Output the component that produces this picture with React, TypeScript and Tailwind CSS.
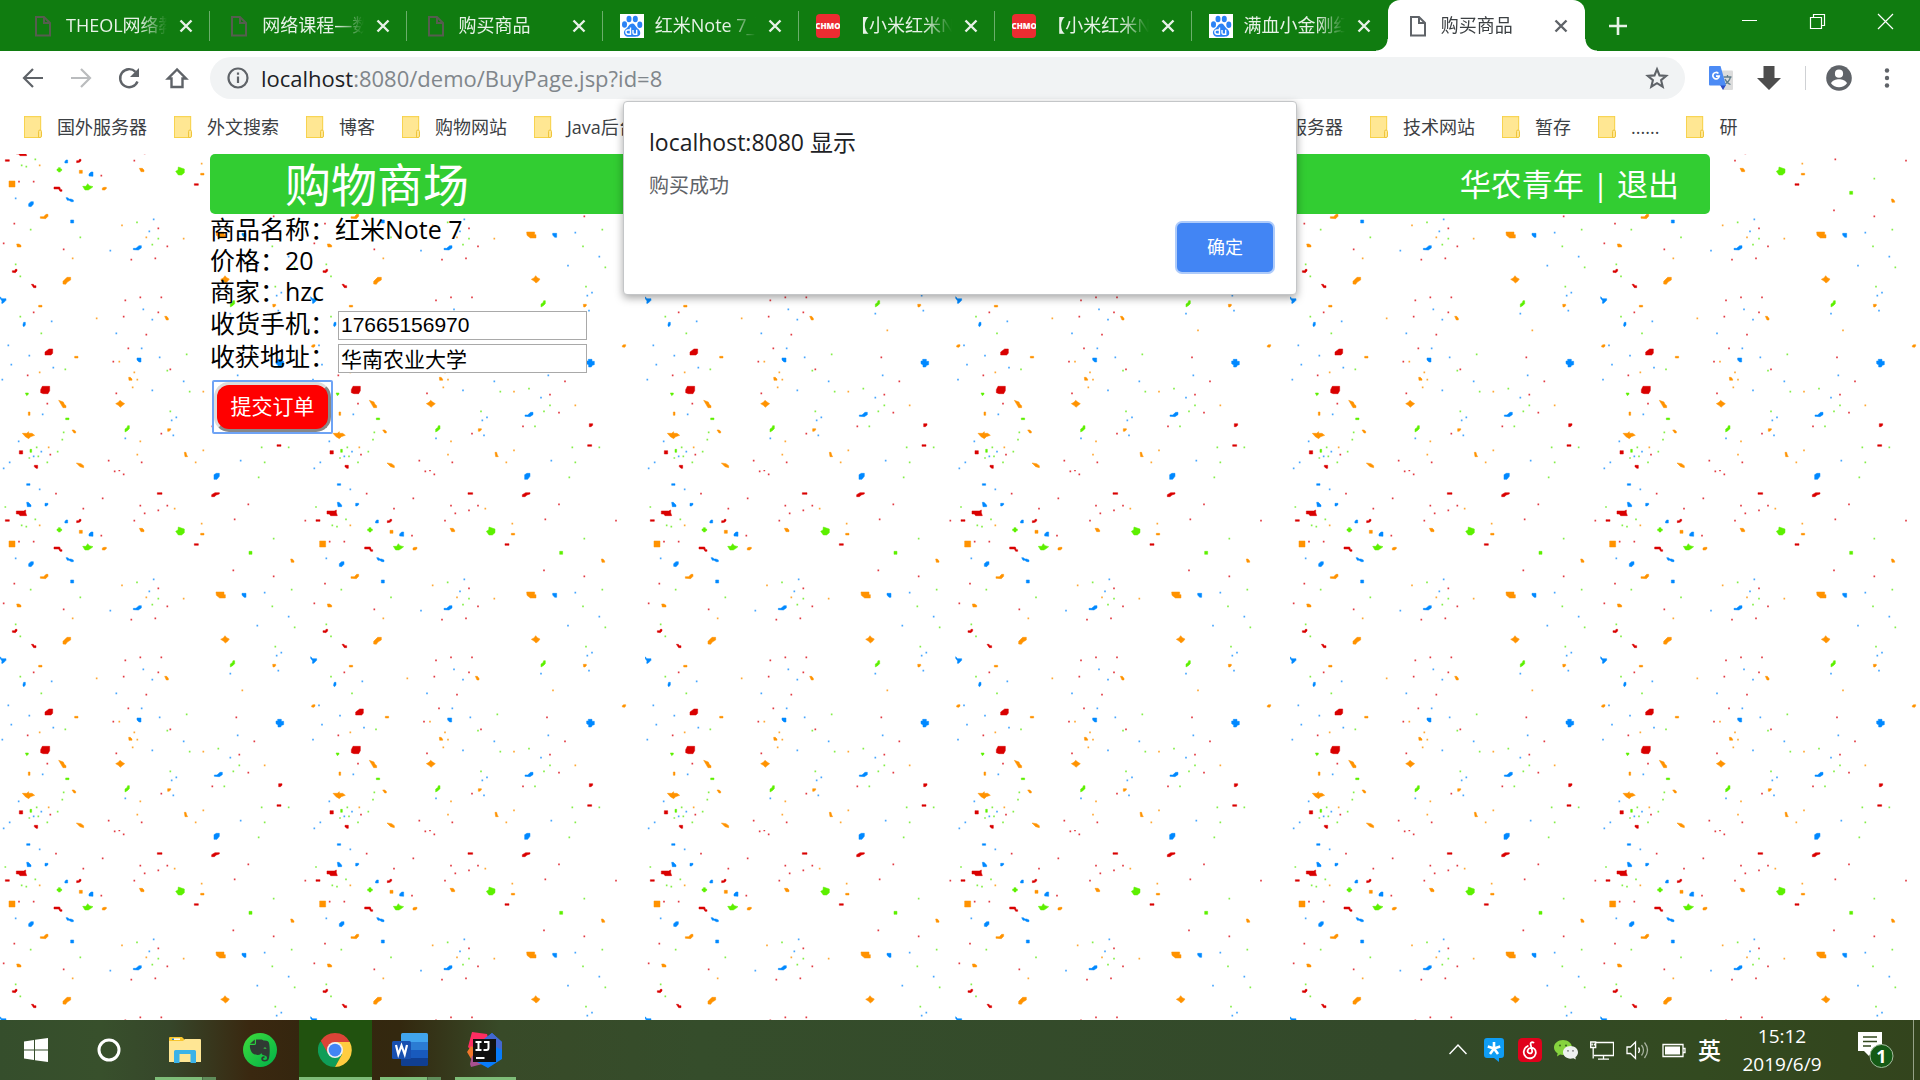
import React from "react";

const DOTS: { color: string; at: number[][] }[] = [
  {
    color: "#e23a42",
    at: [
      [344, 4], [358, 1], [371, 13], [168, 71], [308, 85], [250, 116], [421, 107], [434, 130], [475, 121], [502, 107],
      [403, 152], [745, 103], [704, 148], [304, 197], [57, 215], [101, 215], [916, 152], [700, 301], [821, 319], [43, 341],
      [11, 400], [475, 355], [502, 409], [191, 418], [394, 449], [466, 445], [421, 562], [376, 571], [484, 562], [475, 607],
      [371, 620], [101, 607], [439, 674], [385, 715], [340, 755], [511, 778], [83, 796], [349, 850], [142, 881], [709, 742],
      [763, 814], [718, 854], [745, 908], [637, 949], [484, 971], [151, 1034], [326, 1052], [425, 1057],
    ],
  },
  {
    color: "#ffa834",
    at: [
      [119, 166], [524, 116], [605, 161], [366, 346], [439, 382], [551, 386], [218, 445], [290, 625], [727, 661], [119, 787],
      [358, 755], [403, 787], [412, 809], [398, 832], [610, 845], [794, 886], [146, 1012], [421, 994], [412, 1034], [610, 1021],
      [587, 1057],
    ],
  },
  {
    color: "#84ee48",
    at: [
      [776, 22], [16, 111], [106, 148], [65, 166], [79, 170], [821, 206], [411, 337], [92, 359], [241, 382], [475, 386],
      [457, 404], [817, 409], [875, 359], [884, 472], [47, 463], [61, 499], [826, 530], [61, 620], [124, 670], [560, 733],
      [196, 778], [502, 782], [655, 836], [569, 845], [718, 886], [511, 904], [700, 904], [673, 949], [191, 967], [187, 989],
      [110, 1012], [173, 1025], [115, 1039], [88, 1044], [142, 1057], [785, 1012], [866, 1012], [794, 1057],
    ],
  },
  {
    color: "#46a6ff",
    at: [
      [119, 58], [47, 265], [461, 328], [448, 364], [331, 422], [794, 368], [866, 440], [772, 467], [844, 548], [830, 557],
      [835, 602], [430, 598], [457, 629], [691, 611], [155, 634], [349, 670], [25, 706], [88, 737], [425, 715], [479, 742],
      [160, 773], [34, 764], [7, 809], [551, 814], [713, 796], [457, 841], [691, 863], [128, 913], [529, 922], [515, 931],
      [520, 976], [376, 985], [56, 994], [124, 1025], [101, 1039], [29, 1057], [11, 1075], [722, 1052],
    ],
  },
];

const PIECES: { color: string; d: string }[] = [
  {
    color: "#d90000",
    d: "M16 149h12v5h-12z M472 68h14v5h-14z M583 221h12v5h-12z M831 1004h12v5h-12z M49 123h22l6-3v8l3 9h-20l-4-5h-7z M635 80v-6l10-6h13v4l-9 3l-6 5z M230 158v-6h6l2-4h5v5l-5 4z M162 231h17l3 8h4v5h-6l-4-7h-14z M37 487v-5h7l2-4h5v5l-5 5z M94 523h6l3 4h5v6h-7z M135 735v-9l12-9h11v13l-5 5z M122 848v-9l5-10h22v13l-5 9h-14z M836 950v-9h10v5l-5 4z M58 1022h10v10h-10z M103 1066h10v9h-5l-5-5z",
  },
  {
    color: "#ff9200",
    d: "M602 190h10v5h-10z M116 586h10v5h-10z M224 739h10v5h-10z M85 906h5v10h-5z M27 213h18v18h-18z M238 181h9v9h-9z M418 175h9l5 5v5h-9z M307 240v-6l5-2h7v4l-5 4z M872 267h5l5 6v4h-8z M121 325v-5h10l7-7h6v6l-7 7z M648 366h24v8h4v10h-17l-10-8z M50 402h7l6 4v5h-11z M189 522v-8l12-12h11v8l-10 6l-5 7z M662 508l8-4l5-7l5 6l8 4l-5 7l-7 5l-5-5z M494 619h6l5 6v5h-6z M818 583h9v4l-4 4h-4z M935 711v-4l4-3h6v4l-3 4z M386 802h5l5 5v4h-9z M176 871l14 5l3 7l5 4v6h-9l-6-10z M347 881l8-4l5-6l6 5l8 5l-6 5l-7 6l-6-6z M67 970h13l6-5v5h10l8 6l-12 4l-6 6l-10-6z M216 960h6l5 4v5h-5z M503 956h9v4l-5 4h-4z M229 1059l14 2l8 6v6l-11-3z M553 1027h5l2 8l3 5h-8z",
  },
  {
    color: "#5cf000",
    d: "M175 173h6v4h4v5h-4v4h-6v-4h-4v-5h4z M535 171l9 3l9 3v11l-8 7h-10l-8-11l7-4z M248 229h10l5-8l5 6l11 3l-6 5l-8 5h-10z M747 244h9v9h-9z M691 591v-9l6-4l2-6h5v9l-6 6z M76 849h9v4l-5 4z M197 924h10v5h-10z M375 966v-9l6-4l2-6h5v9l-6 6z M90 1018h5v9h-5z",
  },
  {
    color: "#0088ff",
    d: "M80 41h10v5h-10z M642 28v-14l7-4h9v9l-7 9z M80 97h5l8 8v5h-11z M135 100h9v4l-5 4h-4z M194 156l4-6h5v9h-8z M267 198v-6l6-6h6v13z M86 289v-8l7-6h7v8l-7 7z M198 263h5l5 4h5l7 3v5h-6l-7-4h-5z M212 330h9v9h-9z M400 419v-4h8l9-8h7v7l-9 6z M726 370h12v12h-6l-6-7z M0 560l6 6h12v5l-9 9h-4l1-7l-6-8z M69 648v-5l2-6h5v8l-4 5z M411 744h12v12h-6l-6-6z M833 748h11v6h7v10l-6 2l-3 5h-8v-6l-6-4v-8h5z M643 919v-4h8l9-8h7v7l-9 6z",
  },
];

function Confetti() {
  return (
    <svg className="pointer-events-none absolute inset-0 h-full w-full" aria-hidden="true">
      <defs>
        <g id="confetti-sheet">
          {DOTS.map((g) => (
            <path key={g.color} fill={g.color} d={g.at.map(([x, y]) => `M${x - 2.5} ${y - 2.5}h5v5h-5z`).join("")} />
          ))}
          {PIECES.map((g) => (
            <path key={g.color} fill={g.color} stroke={g.color} strokeWidth="1.500" d={g.d} />
          ))}
        </g>
        <pattern id="confetti" width="645" height="360" y="316" patternUnits="userSpaceOnUse">
          <g transform="scale(0.33333)">
            <use href="#confetti-sheet" />
            <use href="#confetti-sheet" x="932" />
          </g>
        </pattern>
      </defs>
      <rect width="100%" height="100%" fill="url(#confetti)" />
    </svg>
  );
}

function PageIcon() {
  return (
    <svg viewBox="0 0 24 24" className="size-6" fill="none" stroke="currentColor" strokeWidth="2">
      <path d="M5 3h8l6 6v12.500h-14z M13 3v6h6" />
    </svg>
  );
}

function BaiduIcon() {
  return (
    <svg viewBox="0 0 24 24" className="size-6">
      <rect width="24" height="24" fill="#fff" />
      <g fill="#2a82f5">
        <ellipse cx="4.500" cy="10.500" rx="2.500" ry="3.200" />
        <ellipse cx="9" cy="5" rx="2.500" ry="3.300" />
        <ellipse cx="15.300" cy="5" rx="2.500" ry="3.300" />
        <ellipse cx="19.800" cy="10.800" rx="2.500" ry="3.200" />
        <path d="M12.200 9.500c-2.500 0-3.200 2.300-4.700 3.900s-4.200 3-3.400 6.300c.8 3.200 3.800 3.300 8.100 3s7.400.4 8-3c.5-3.200-2-4.300-3.700-6.400-1.400-1.800-2-3.800-4.300-3.800z" />
      </g>
      <path d="M10.500 13.500v6.700h-2.500a2 2 0 0 1 0-4.200h2.500 M13 16v3a1.300 1.300 0 0 0 1.300 1.200h2.400v-4.400" fill="none" stroke="#fff" strokeWidth="1.400" />
    </svg>
  );
}

function CnmoIcon() {
  return (
    <span className="flex size-6 items-center justify-center overflow-hidden rounded bg-[#ec2c31] text-[8px] leading-none font-extrabold text-white">
      CHMO
    </span>
  );
}

const TABS = [
  { title: "THEOL网络教学", icon: "page" },
  { title: "网络课程—数据", icon: "page" },
  { title: "购买商品", icon: "page" },
  { title: "红米Note 7_百度", icon: "baidu" },
  { title: "【小米红米Note", icon: "cnmo" },
  { title: "【小米红米Note", icon: "cnmo" },
  { title: "满血小金刚红米", icon: "baidu" },
  { title: "购买商品", icon: "page", active: true },
];

function Cross() {
  return (
    <svg viewBox="0 0 14 14" className="size-3.5" stroke="currentColor" strokeWidth="2.400">
      <path d="M1.500 1.500l11 11M12.500 1.500l-11 11" />
    </svg>
  );
}

function TabStrip() {
  return (
    <div className="flex h-[51px] items-stretch bg-[#107c10] text-[18px] text-[#e7f2e7]">
      <div className="ml-[14px] flex w-[1571px] shrink">
        {TABS.map((tab, i) => (
          <div
            key={i}
            className={
              tab.active
                ? "relative flex min-w-0 flex-1 items-center rounded-t-xl bg-white pr-[17px] pl-[18px] text-[#3c4043]"
                : "relative flex min-w-0 flex-1 items-center pr-[17px] pl-[17px]"
            }
          >
            {tab.active && (
              <>
                <span className="absolute bottom-0 -left-3 size-3 bg-[radial-gradient(circle_at_0_0,#107c10_11px,#fff_12px)]" />
                <span className="absolute -right-3 bottom-0 size-3 bg-[radial-gradient(circle_at_100%_0,#107c10_11px,#fff_12px)]" />
              </>
            )}
            <span className={tab.active ? "shrink-0 text-[#5f6368]" : "shrink-0 text-[#565d4f]"}>
              {tab.icon === "page" && <PageIcon />}
              {tab.icon === "baidu" && <BaiduIcon />}
              {tab.icon === "cnmo" && <CnmoIcon />}
            </span>
            <span className="ml-[11px] min-w-0 flex-1 overflow-hidden whitespace-nowrap [mask-image:linear-gradient(to_right,#000_72%,transparent)]">
              {tab.title}
            </span>
            <button type="button" aria-label="关闭标签页" className={tab.active ? "ml-3 text-[#5f6368]" : "ml-3"}>
              <Cross />
            </button>
            {i < 6 && <span className="absolute top-[11px] right-0 h-[30px] w-px bg-[#6bae6b]" />}
          </div>
        ))}
      </div>
      <button type="button" aria-label="新标签页" className="ml-[23px] self-center">
        <svg viewBox="0 0 20 20" className="size-5" stroke="currentColor" strokeWidth="2.600">
          <path d="M10 1v18M1 10h18" />
        </svg>
      </button>
      <div className="mt-[13px] mr-[26px] ml-auto flex items-start gap-[51px] text-white">
        <button type="button" aria-label="最小化">
          <svg viewBox="0 0 17 17" className="size-[17px]" stroke="currentColor">
            <path d="M1 7.500h15" />
          </svg>
        </button>
        <button type="button" aria-label="向下还原">
          <svg viewBox="0 0 17 17" className="size-[17px]" fill="none" stroke="currentColor" strokeWidth="1.200">
            <path d="M1.500 4.500h11v11h-11z M4.500 4.500v-3h11v11h-3" />
          </svg>
        </button>
        <button type="button" aria-label="关闭">
          <svg viewBox="0 0 17 17" className="size-[17px]" stroke="currentColor" strokeWidth="1.200">
            <path d="M1 1l15 15M16 1l-15 15" />
          </svg>
        </button>
      </div>
    </div>
  );
}

function Toolbar() {
  return (
    <div className="flex h-[54px] items-center bg-white text-[#5f6368]">
      <div className="flex w-[210px] shrink-0 items-center gap-6 pl-[21px]">
        <button type="button" aria-label="后退">
          <svg viewBox="0 0 24 24" className="size-6" fill="none" stroke="currentColor" strokeWidth="2.200">
            <path d="M22 12H3.500M12 3l-9 9l9 9" />
          </svg>
        </button>
        <button type="button" aria-label="前进" className="text-[#babcbe]">
          <svg viewBox="0 0 24 24" className="size-6" fill="none" stroke="currentColor" strokeWidth="2.200">
            <path d="M2 12h18.500M12 3l9 9l-9 9" />
          </svg>
        </button>
        <button type="button" aria-label="重新加载">
          <svg viewBox="0 0 24 24" className="size-6" fill="none" stroke="currentColor" strokeWidth="2.400">
            <path d="M20.500 15.500A9 9 0 1 1 18.500 5.800" />
            <path d="M22 2v9h-9z" fill="currentColor" stroke="none" />
          </svg>
        </button>
        <button type="button" aria-label="主页">
          <svg viewBox="0 0 24 24" className="size-6" fill="none" stroke="currentColor" strokeWidth="2.400">
            <path d="M12 3.500l-9 9h3.500v8.500h11v-8.500h3.500z" />
          </svg>
        </button>
      </div>
      <div className="flex h-[42px] flex-1 items-center rounded-full bg-[#f1f3f4] pr-[16px] pl-[16px]">
        <svg viewBox="0 0 24 24" className="size-6 shrink-0" fill="none" stroke="currentColor" strokeWidth="2.200">
          <circle cx="12" cy="12" r="9.500" />
          <path d="M12 10.500v6.500M12 6.500v2.300" />
        </svg>
        <div className="ml-[11px] flex-1 text-[22px] leading-[28px] text-[#80868b]">
          <span className="text-[#202124]">localhost</span>:8080/demo/BuyPage.jsp?id=8
        </div>
        <button type="button" aria-label="为此标签页添加书签">
          <svg viewBox="0 0 24 24" className="size-6" fill="none" stroke="currentColor" strokeWidth="2.100">
            <path d="M12 3.200l2.500 6.200l6.700.5l-5.100 4.300l1.600 6.500l-5.700-3.500l-5.700 3.500l1.600-6.500l-5.100-4.300l6.700-.5z" />
          </svg>
        </button>
      </div>
      <div className="flex w-[235px] shrink-0 items-center pl-[24px]">
        <button type="button" aria-label="翻译">
          <svg viewBox="0 0 24 24" className="size-6">
            <path d="M10 4.500h13a1 1 0 0 1 1 1V23a1 1 0 0 1-1 1H14z" fill="#dcdcdc" />
            <path d="M14.500 11h8M18.500 9v2M21.500 11c-.8 3-3.500 6-6 7.500M16 13c1 2.500 3.500 4.800 5.500 5.500" stroke="#607d8b" strokeWidth="1.300" fill="none" />
            <path d="M11 19h6l-3 5z" fill="#2b4bc5" />
            <path d="M1 0h10.500L17 19.500H1a1 1 0 0 1-1-1V1a1 1 0 0 1 1-1z" fill="#4c8bf5" />
            <path d="M9.400 7.500A3.200 3.200 0 1 0 10.200 10.200H7" stroke="#fff" strokeWidth="1.700" fill="none" />
          </svg>
        </button>
        <button type="button" aria-label="下载" className="ml-[24px] text-[#4d4d4d]">
          <svg viewBox="0 0 24 24" className="size-6" fill="currentColor">
            <path d="M6.500 0h11v12H24L12 24L0 12h6.500z" />
          </svg>
        </button>
        <span className="ml-[24px] h-6 w-px bg-[#cfd1d4]" />
        <button type="button" aria-label="用户" className="ml-[20px]">
          <svg viewBox="0 0 26 26" className="size-[26px]">
            <circle cx="13" cy="13" r="12.800" fill="#5f6368" />
            <circle cx="13" cy="8.700" r="4.100" fill="#fff" />
            <path d="M5 18.200c1.200-2.800 5-4 8-4s6.800 1.200 8 4a9.800 9.800 0 0 1-16 0z" fill="#fff" />
          </svg>
        </button>
        <button type="button" aria-label="更多" className="ml-[23px]">
          <svg viewBox="0 0 24 24" className="size-6" fill="currentColor">
            <circle cx="12" cy="4.500" r="2.200" />
            <circle cx="12" cy="12" r="2.200" />
            <circle cx="12" cy="19.500" r="2.200" />
          </svg>
        </button>
      </div>
    </div>
  );
}

function Bookmark({ label }: { label: string }) {
  return (
    <a href="#" className="flex shrink-0 items-center gap-[15px] whitespace-nowrap">
      <svg viewBox="0 0 18 22" className="h-[22px] w-[18px]">
        <path d="M1 0h15a1 1 0 0 1 1 1v20a1 1 0 0 1-1 1H0V1a1 1 0 0 1 1-1z" fill="#ffe793" />
        <path d="M0 .7h17M.4 0v22M0 21.500h16M16.700 0v14" stroke="#f7d148" fill="none" />
        <path d="M14.500 21.500v-6a1.500 1.500 0 0 1 3 0v4.500a1.500 1.500 0 0 1-1.500 1.500z" fill="#ffe793" stroke="#efc53c" />
      </svg>
      {label}
    </a>
  );
}

function BookmarksBar() {
  return (
    <nav className="flex h-[49px] items-start gap-[27px] overflow-hidden bg-white pt-[7px] pl-[24px] text-[18px] leading-[30px] text-[#3c4043]">
      {["国外服务器", "外文搜索", "博客", "购物网站"].map((b) => (
        <Bookmark key={b} label={b} />
      ))}
      <div className="w-[695px] shrink-0">
        <Bookmark label="Java后台" />
      </div>
      {["服务器", "技术网站", "暂存", "......", "研"].map((b) => (
        <Bookmark key={b} label={b} />
      ))}
    </nav>
  );
}

function AlertDialog() {
  return (
    <div
      role="alertdialog"
      aria-labelledby="alert-title"
      className="absolute top-[101px] left-1/2 flex w-[674px] -translate-x-1/2 flex-col rounded-[4px] border border-[#c4c6c8] bg-white pt-[25px] pr-[23px] pb-[22px] pl-[25px] shadow-[0_3px_8px_rgba(0,0,0,0.35)]"
    >
      <h2 id="alert-title" className="text-[23px] leading-[30px] text-[#202124]">
        localhost:8080 显示
      </h2>
      <p className="mt-[15px] text-[20px] leading-[28px] text-[#5f6368]">购买成功</p>
      <button
        type="button"
        className="mt-[23px] h-[49px] w-[96px] self-end rounded-[5px] bg-[#4285f4] text-[18px] text-white ring-2 ring-[#aecbfa]"
      >
        确定
      </button>
    </div>
  );
}

function ShopPage() {
  return (
    <main className="relative flex-1 overflow-hidden bg-white">
      <Confetti />
      <div className="relative mx-auto max-w-[1500px] text-[25px] text-black">
        <header className="flex h-[60px] items-center justify-between rounded-[5px] bg-[#32cd32] pr-[31px] pl-[75px] text-white">
          <h1 className="text-[46px] leading-[60px]">购物商场</h1>
          <div className="text-[31px] leading-[60px]">
            华农青年 | <a href="#">退出</a>
          </div>
        </header>
        <form>
          <p className="leading-[31px]">商品名称：红米Note 7</p>
          <p className="leading-[31px]">价格：20</p>
          <p className="leading-[31px]">商家：hzc</p>
          <div className="flex h-[33px] items-center">
            <label htmlFor="phone" className="w-[128px] whitespace-nowrap">
              收货手机：
            </label>
            <input
              id="phone"
              defaultValue="17665156970"
              className="mt-[3px] h-[29px] w-[249px] border border-[#a9a9a9] bg-white px-[2px] font-['Liberation_Sans','Noto_Sans_CJK_SC',sans-serif] text-[21px] leading-[27px]"
            />
          </div>
          <div className="flex h-[33px] items-center">
            <label htmlFor="address" className="w-[128px] whitespace-nowrap">
              收获地址：
            </label>
            <input
              id="address"
              defaultValue="华南农业大学"
              className="mt-[3px] h-[29px] w-[249px] border border-[#a9a9a9] bg-white px-[2px] font-['Liberation_Sans','Noto_Sans_CJK_SC',sans-serif] text-[21px] leading-[27px]"
            />
          </div>
          <div className="mt-[7px] ml-[2px] inline-flex rounded-[2px] border-2 border-[#6ea3f5]">
            <button
              type="button"
              className="h-[50px] w-[117px] rounded-[15px] border-[3px] border-t-[#dcdcdc] border-r-[#888] border-b-[#888] border-l-[#dcdcdc] bg-[red] text-[21px] text-white"
            >
              提交订单
            </button>
          </div>
        </form>
      </div>
    </main>
  );
}

function WindowsLogo() {
  return (
    <svg viewBox="0 0 24 24" className="size-6" fill="#fff">
      <path d="M0 3.400L10 2v9.500H0z M11 1.800L24 0v11.500H11z M0 12.500h10V22L0 20.600z M11 12.500h13V24l-13-1.800z" />
    </svg>
  );
}

function ExplorerIcon() {
  return (
    <svg viewBox="0 0 32 28" className="h-[28px] w-[32px]">
      <path d="M0 2a1 1 0 0 1 1-1h12l3 3v4H0z" fill="#f7c52d" />
      <path d="M3 3.200h8" stroke="#fff" strokeWidth="1.500" />
      <path d="M3 3.200h2" stroke="#1f7fd0" strokeWidth="1.500" />
      <path d="M0 5h14l2-2h15a1 1 0 0 1 1 1v22H0z" fill="#ffe694" />
      <path d="M5 15.500a1.500 1.500 0 0 1 1.500-1.500h19a1.500 1.500 0 0 1 1.500 1.500V27h-5.500v-9h-11v9H5z" fill="#3bb3e8" />
    </svg>
  );
}

function EvernoteIcon() {
  return (
    <svg viewBox="0 0 34 34" className="size-[34px]">
      <defs>
        <linearGradient id="ever" x1="0" y1="0" x2="1" y2="1">
          <stop offset="0" stopColor="#3fdc3a" />
          <stop offset="1" stopColor="#00b04a" />
        </linearGradient>
      </defs>
      <circle cx="17" cy="17" r="17" fill="url(#ever)" />
      <path
        fill="#2f3a33"
        d="M13 6.500h5.500c1 0 1.600 1 3 1.100c3 .3 4.300.8 4.700 3.400c.8 5 .6 11-.3 14.500c-.5 2-1.800 3-4.300 3c-2.600 0-3.600-1.500-3.300-3.300c.2-1.500 1.400-2.200 3.200-2v1.700c-1-.1-1.500.4-1.400 1.200c.1.700.7 1 1.800.9c1.500 0 2.100-.8 2.100-2c0-1.700-.8-2.300-2.600-2.600c-1.700-.2-2.700-.8-3.100-2.300c-.6 1.400-1.800 2-3.700 1.900c-4-.3-6.700-2-7.600-7.500c-.2-1-.2-2 .1-2.500h4.500c1 0 1.400-.5 1.400-1.400z"
      />
      <path d="M7 10.800L11.800 6.500v4.300z" fill="#2f3a33" />
      <path d="M20.500 15.500c.3-1.500 2.600-1.500 3 .3z" fill="#3fd34b" />
    </svg>
  );
}

function ChromeIcon() {
  return (
    <svg viewBox="0 0 48 48" className="size-[34px]">
      <path d="M24 24L3.200 12A24 24 0 0 0 24 48l10.400-18z" fill="#0f9d58" />
      <path d="M24 12.800H44.900A24 24 0 0 1 24 48l10-18z" fill="#ffcd40" />
      <path d="M24 0A24 24 0 0 0 3.800 11L13.500 28L24 12.800h20.900A24 24 0 0 0 24 0z" fill="#db4437" />
      <circle cx="24" cy="24" r="11.300" fill="#f1f1f1" />
      <circle cx="24" cy="24" r="9" fill="#4285f4" />
    </svg>
  );
}

function WordIcon() {
  return (
    <svg viewBox="0 0 36 34" className="h-[34px] w-[36px]">
      <path d="M9 1.500A1.500 1.500 0 0 1 10.500 0h24A1.500 1.500 0 0 1 36 1.500V9H9z" fill="#41a5ee" />
      <path d="M9 9h27v8H9z" fill="#2b7cd3" />
      <path d="M9 17h27v8H9z" fill="#185abd" />
      <path d="M9 25h27v6.500a1.500 1.500 0 0 1-1.500 1.500h-24A1.500 1.500 0 0 1 9 31.500z" fill="#103f91" />
      <rect y="8" width="19" height="18" rx="1.500" fill="#1850b0" />
      <path d="M4 12l2.300 9.500l3.200-9l3.200 9l2.300-9.500" fill="none" stroke="#fff" strokeWidth="2.200" />
    </svg>
  );
}

function IdeaIcon() {
  return (
    <svg viewBox="0 0 36 36" className="size-9">
      <path d="M1 15L5 0l15 2l3 12L8 22z" fill="#fe2d62" />
      <path d="M0 20l4-6l10 6l-8 10z" fill="#f2772b" />
      <path d="M5 24l14-4l4 10l-19 5l-1-3z" fill="#a8508f" />
      <path d="M17 7l8-6l10 9v17l-14 9l-11-6l14-5z" fill="#087cfa" />
      <path d="M18 7l7-6l10 9v8l-8-4z" fill="#4467cf" />
      <rect x="6" y="7" width="23" height="23" fill="#111" />
      <path d="M8.500 10h6M11.500 10v8M8.500 18h6M17 10h4.500v6q0 2-2 2h-3" fill="none" stroke="#fff" strokeWidth="2" />
      <path d="M9 26h8.500" stroke="#fff" strokeWidth="2" />
    </svg>
  );
}

function TaskButton({ label, state, children }: { label: string; state?: "open" | "stacked" | "active"; children: React.ReactNode }) {
  return (
    <button
      type="button"
      aria-label={label}
      className={
        state === "active"
          ? "relative flex h-full w-[73px] items-center justify-center bg-[#21520f] pr-[2px]"
          : "relative flex h-full w-[73px] items-center justify-center pr-[2px]"
      }
    >
      {children}
      {state === "active" && <span className="absolute inset-x-0 bottom-0 h-[3px] bg-[#7ebd78]" />}
      {state === "open" && <span className="absolute inset-x-[6px] bottom-0 h-[3px] bg-[#7ebd78]" />}
      {state === "stacked" && (
        <span className="absolute inset-x-[6px] bottom-0 flex h-[3px]">
          <span className="flex-1 bg-[#7ebd78]" />
          <span className="w-[14px] border-l border-[#4a6b45] bg-[#5f8c5a]" />
        </span>
      )}
    </button>
  );
}

function Taskbar() {
  return (
    <footer className="flex h-[60px] shrink-0 items-center bg-[linear-gradient(to_right,#354e2c_0px,#38502c_100px,#36462a_170px,#3a2810_250px,#35260f_300px,#33280f_400px,#384a28_500px,#354d2b_700px,#33492a_1400px,#334a20_1700px,#33441d_100%)] text-white">
      <div className="flex h-full items-center">
        <TaskButton label="开始">
          <WindowsLogo />
        </TaskButton>
        <TaskButton label="Cortana">
          <svg viewBox="0 0 24 24" className="size-6">
            <circle cx="12" cy="12" r="10" fill="none" stroke="#fff" strokeWidth="3" />
          </svg>
        </TaskButton>
        <div className="ml-[3px] flex h-full items-center gap-[2px]">
          <TaskButton label="文件资源管理器" state="stacked">
            <ExplorerIcon />
          </TaskButton>
          <TaskButton label="印象笔记">
            <EvernoteIcon />
          </TaskButton>
          <TaskButton label="Google Chrome" state="active">
            <ChromeIcon />
          </TaskButton>
          <TaskButton label="Word" state="stacked">
            <WordIcon />
          </TaskButton>
          <TaskButton label="IntelliJ IDEA" state="open">
            <IdeaIcon />
          </TaskButton>
        </div>
      </div>
      <div className="ml-auto flex h-full items-center gap-[12px]">
        <svg viewBox="0 0 18 24" className="mr-[3px] h-6 w-[18px]" fill="none" stroke="#fff" strokeWidth="1.500">
          <path d="M.5 16l8.500-9l8.500 9" />
        </svg>
        <svg viewBox="0 0 24 24" className="size-6">
          <path d="M5 0h14a3 3 0 0 1 3 3v14a3 3 0 0 1-3 3h-2v4l-5-4H5a3 3 0 0 1-3-3V3a3 3 0 0 1 3-3z" fill="#0f9df5" />
          <path d="M12 4v6.500M5.800 8.500l6.200 2M18.200 8.500l-6.200 2M12 10.500l-4 5.500M12 10.500l4 5.500" stroke="#fff" strokeWidth="2.600" />
        </svg>
        <svg viewBox="0 0 24 24" className="size-6">
          <rect width="24" height="24" rx="4.500" fill="#e0021c" />
          <path d="M15.500 4.500c-2.200-.8-3.300.6-2.800 2.300l1.400 5.700a2.300 2.300 0 1 1-4.300-.3c.7-2.700 4.700-3.300 6.700-1.200c2.300 2.600 1.500 7.500-2.300 8.800c-5 1.700-9-2-8.400-6.500c.3-2.500 1.700-4.300 4-5.300" fill="none" stroke="#fff" strokeWidth="1.800" strokeLinecap="round" />
        </svg>
        <svg viewBox="0 0 24 24" className="size-6">
          <path d="M9 2c5 0 9 3.200 9 7.500S14 17 9 17c-1 0-2-.1-2.900-.4L3 18.500l.6-3.200C1.400 14 0 12 0 9.500C0 5.200 4 2 9 2z" fill="#86d33e" />
          <circle cx="6" cy="7.500" r="1.100" fill="#3d6a1c" />
          <circle cx="12" cy="7.500" r="1.100" fill="#3d6a1c" />
          <path d="M16.500 8c4.200 0 7.500 2.800 7.500 6.300c0 2-1 3.700-2.600 4.900l.4 2.300l-2.400-1.300c-5.500 1.600-10.400-1.400-10.400-5.900C9 10.800 12.300 8 16.500 8z" fill="#eef1f0" />
          <circle cx="14" cy="12.800" r=".9" fill="#777" />
          <circle cx="19" cy="12.800" r=".9" fill="#777" />
        </svg>
        <svg viewBox="0 0 24 24" className="size-6" fill="none" stroke="#fff" strokeWidth="1.300">
          <path d="M6 4.500h17.500v13H4M.7 4h5v5.500h-5z M3.200 9.500v11 M13.500 17.500v3.500 M8 21.200h11 M2.200 5.500v2M4.400 5.500v2" />
        </svg>
        <svg viewBox="0 0 24 24" className="size-6" fill="none" stroke="#fff" strokeWidth="1.300">
          <path d="M1 9h3.500L9.500 4v16.500l-5-5H1z M12.500 9.500q2 2.500 0 5.500" />
          <path d="M15.500 7q4 5 0 10.500M18.500 4.500q6 7.500 0 15.500" stroke="#a7b19e" />
        </svg>
        <svg viewBox="0 0 24 24" className="size-6">
          <path d="M1 6.500h20v12H1z M21 10.500h2v4h-2" fill="none" stroke="#fff" strokeWidth="1.300" />
          <path d="M3 8.500h15v8H3z" fill="#fff" />
        </svg>
        <span className="w-6 text-[23px] leading-none font-medium">英</span>
      </div>
      <div className="ml-[9px] w-[102px] text-center text-[19px] leading-[28px] whitespace-nowrap">
        15:12
        <br />
        2019/6/9
      </div>
      <button type="button" aria-label="1 条新通知" className="mr-[19px] ml-[25px]">
        <svg viewBox="0 0 36 36" className="size-9">
          <path d="M0 0h24v19H14l-3 5l-5-5H0z" fill="#fff" />
          <path d="M5 5h14M5 9.500h14M5 14h8" stroke="#33491f" strokeWidth="1.300" />
          <circle cx="23.500" cy="24" r="11.500" fill="#155a15" stroke="#a6bda0" />
          <text x="23.500" y="30.500" textAnchor="middle" fill="#fff" fontSize="18" fontWeight="700">
            1
          </text>
        </svg>
      </button>
      <span className="mr-[6px] h-full w-px bg-[#95a187]" />
    </footer>
  );
}

export default function App() {
  return (
    <div className="relative flex min-h-screen flex-col bg-white font-['Open_Sans','Noto_Sans_CJK_SC',sans-serif]">
      <TabStrip />
      <Toolbar />
      <BookmarksBar />
      <ShopPage />
      <Taskbar />
      <AlertDialog />
    </div>
  );
}
